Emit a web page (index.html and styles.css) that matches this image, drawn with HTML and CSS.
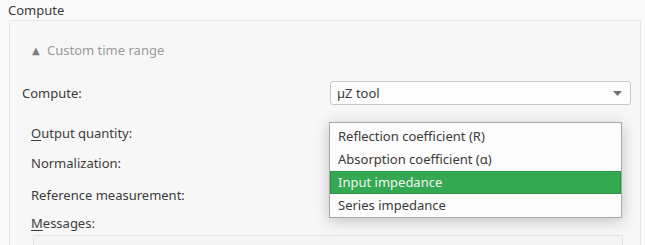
FILE: index.html
```html
<!DOCTYPE html>
<html>
<head>
<meta charset="utf-8">
<link rel="stylesheet" href="styles.css">
</head>
<body>
<div class="title">Compute</div>
<div class="group">
  <div class="toggle"><span class="tri">▲</span><span>Custom time range</span></div>
  <div class="row main">
    <div class="label">Compute:</div>
    <div class="combo">
      <span>µZ tool</span>
      <svg class="arrow" width="9" height="5" viewBox="0 0 9 5"><path d="M0 0H9L4.5 5Z" fill="#707070"/></svg>
    </div>
  </div>
  <div class="sub">
    <div class="row r1"><div class="label"><u>O</u>utput quantity:</div></div>
    <div class="row r2"><div class="label">Normalization:</div></div>
    <div class="row r3"><div class="label">Reference measurement:</div></div>
    <div class="row r4"><div class="label"><u>M</u>essages:</div></div>
    <div class="msgbox"></div>
  </div>
  <div class="popup">
    <div class="item">Reflection coefficient (R)</div>
    <div class="item">Absorption coefficient (α)</div>
    <div class="item sel">Input impedance</div>
    <div class="item">Series impedance</div>
  </div>
</div>
</body>
</html>
```
FILE: styles.css
```css
html, body {
  margin: 0;
  padding: 0;
  background: #fafafa;
  font-family: "Noto Sans", "DejaVu Sans", sans-serif;
  font-size: 13px;
  color: #3c3c3c;
  overflow: hidden;
  height: 245px;
}
.title {
  height: 20px;
  line-height: 21px;
  padding-left: 8px;
}
.group {
  position: relative;
  margin-left: 9px;
  width: 632px;
  height: 225px;
  border: 1px solid #e6e6e6;
  border-bottom: none;
  border-radius: 2px 2px 0 0;
  background: #f7f7f7;
  box-sizing: border-box;
}
.toggle {
  margin-top: 17px;
  height: 24px;
  display: flex;
  align-items: center;
  padding-left: 22px;
  color: #9a9a9a;
}
.tri {
  font-size: 10px;
  color: #808080;
  width: 15px;
}
.row {
  display: flex;
  align-items: center;
  height: 24px;
}
.main {
  margin-top: 19px;
  padding-left: 12px;
}
.main .label {
  width: 308px;
}
.combo {
  width: 301px;
  height: 24px;
  box-sizing: border-box;
  border: 1px solid #c8c8c8;
  border-radius: 3px;
  background: #fdfdfd;
  display: flex;
  align-items: center;
  justify-content: space-between;
  padding: 0 8px 0 6px;
}
.sub {
  padding-left: 21px;
}
.r1 { margin-top: 16px; }
.r2 { margin-top: 6px; }
.r3 { margin-top: 8px; }
.r4 { margin-top: 4px; }
.label u {
  text-decoration-thickness: 1px;
  text-underline-offset: 2px;
}
.msgbox {
  margin-left: 2px;
  width: 588px;
  height: 20px;
  border: 1px solid #e2e2e2;
  border-bottom: none;
  background: #f5f5f5;
  border-radius: 2px 2px 0 0;
}
.popup {
  position: absolute;
  left: 319px;
  top: 101px;
  width: 293px;
  box-sizing: border-box;
  border: 1px solid #a8a8a8;
  background: #fcfcfc;
  padding: 2px 0 0 0;
  box-shadow: 0 3px 14px rgba(0, 0, 0, 0.22);
}
.item {
  height: 23px;
  line-height: 23px;
  padding-left: 8px;
  color: #3a3a3a;
}
.item.sel {
  background: #35a852;
  color: #eef7ef;
  box-shadow: inset 0 0 0 1px #2a9646;
}
```
